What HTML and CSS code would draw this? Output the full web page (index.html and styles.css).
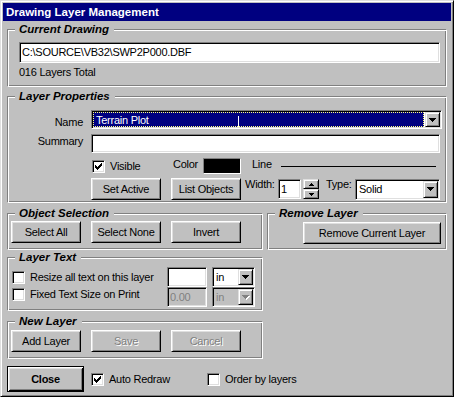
FILE: index.html
```html
<!DOCTYPE html>
<html lang="en">
<head>
    <meta charset="UTF-8">
    <meta name="viewport" content="width=device-width, initial-scale=1.0">
    <title>Drawing Layer Management</title>
    <link rel="stylesheet" href="styles.css">
</head>
<body>
    <div class="window">
        <div class="title-bar">Drawing Layer Management</div>
        <div class="client">
            <fieldset class="group current-drawing">
                <legend>Current Drawing</legend>
                <div class="field path-field">C:\SOURCE\VB32\SWP2P000.DBF</div>
                <div class="layer-count">016 Layers Total</div>
            </fieldset>

            <fieldset class="group layer-props">
                <legend>Layer Properties</legend>
                <div class="props-grid">
                    <span class="prop-label name-label">Name</span>
                    <div class="field combo name-combo">
                        <span class="combo-selected">Terrain Plot</span>
                        <span class="drop-button">
                            <svg width="7" height="4" viewBox="0 0 7 4"><path d="M0 0h7v1H0zM1 1h5v1H1zM2 2h3v1H2zM3 3h1v1H3z"/></svg>
                        </span>
                        <span class="text-cursor"></span>
                    </div>
                    <span class="prop-label summary-label">Summary</span>
                    <div class="field summary-field"></div>

                    <div class="style-row">
                        <div class="visible-box">
                            <span class="check">
                                <svg width="7" height="7" viewBox="0 0 7 7"><path d="M6 0h1v1H6zM5 1h2v1H5zM0 2h1v1H0zM4 2h3v1H4zM0 3h2v1H0zM3 3h3v1H3zM0 4h5v1H0zM1 5h3v1H1zM2 6h1v1H2z"/></svg>
                            </span>
                            <span class="check-text">Visible</span>
                        </div>
                        <span class="color-label">Color</span>
                        <span class="color-swatch"></span>
                        <span class="line-label">Line</span>
                        <span class="line-sample"></span>
                    </div>

                    <div class="action-row">
                        <button class="button">Set Active</button>
                        <button class="button list-button">List Objects</button>
                        <span class="width-label">Width:</span>
                        <div class="field width-field">1</div>
                        <div class="spinner">
                            <span class="spin-button">
                                <svg width="5" height="3" viewBox="0 0 5 3"><path d="M2 0h1v1H2zM1 1h3v1H1zM0 2h5v1H0z"/></svg>
                            </span>
                            <span class="spin-button">
                                <svg width="5" height="3" viewBox="0 0 5 3"><path d="M0 0h5v1H0zM1 1h3v1H1zM2 2h1v1H2z"/></svg>
                            </span>
                        </div>
                        <span class="type-label">Type:</span>
                        <div class="field combo type-combo">
                            <span class="combo-text">Solid</span>
                            <span class="drop-button">
                                <svg width="7" height="4" viewBox="0 0 7 4"><path d="M0 0h7v1H0zM1 1h5v1H1zM2 2h3v1H2zM3 3h1v1H3z"/></svg>
                            </span>
                        </div>
                    </div>
                </div>
            </fieldset>

            <div class="split-row">
                <fieldset class="group object-selection">
                    <legend>Object Selection</legend>
                    <div class="button-row">
                        <button class="button">Select All</button>
                        <button class="button">Select None</button>
                        <button class="button">Invert</button>
                    </div>
                </fieldset>
                <fieldset class="group remove-layer">
                    <legend>Remove Layer</legend>
                    <button class="button remove-button">Remove Current Layer</button>
                </fieldset>
            </div>

            <fieldset class="group layer-text">
                <legend>Layer Text</legend>
                <div class="text-options">
                    <div class="text-checks">
                        <div class="check-item">
                            <span class="check"></span>
                            <span class="check-text">Resize all text on this layer</span>
                        </div>
                        <div class="check-item">
                            <span class="check"></span>
                            <span class="check-text">Fixed Text Size on Print</span>
                        </div>
                    </div>
                    <div class="text-sizes">
                        <div class="size-row">
                            <div class="field size-field"></div>
                            <div class="field combo unit-combo">
                                <span class="combo-text">in</span>
                                <span class="drop-button">
                                    <svg width="7" height="4" viewBox="0 0 7 4"><path d="M0 0h7v1H0zM1 1h5v1H1zM2 2h3v1H2zM3 3h1v1H3z"/></svg>
                                </span>
                            </div>
                        </div>
                        <div class="size-row">
                            <div class="field size-field disabled">0.00</div>
                            <div class="field combo unit-combo disabled">
                                <span class="combo-text">in</span>
                                <span class="drop-button">
                                    <svg width="8" height="5" viewBox="0 0 8 5"><path fill="#fff" d="M1 1h7v1H1zM2 2h5v1H2zM3 3h3v1H3zM4 4h1v1H4z"/><path fill="#808080" d="M0 0h7v1H0zM1 1h5v1H1zM2 2h3v1H2zM3 3h1v1H3z"/></svg>
                                </span>
                            </div>
                        </div>
                    </div>
                </div>
            </fieldset>

            <fieldset class="group new-layer">
                <legend>New Layer</legend>
                <div class="button-row">
                    <button class="button">Add Layer</button>
                    <button class="button" disabled>Save</button>
                    <button class="button" disabled>Cancel</button>
                </div>
            </fieldset>

            <div class="footer">
                <button class="button close-button">Close</button>
                <div class="check-item auto-redraw">
                    <span class="check">
                        <svg width="7" height="7" viewBox="0 0 7 7"><path d="M6 0h1v1H6zM5 1h2v1H5zM0 2h1v1H0zM4 2h3v1H4zM0 3h2v1H0zM3 3h3v1H3zM0 4h5v1H0zM1 5h3v1H1zM2 6h1v1H2z"/></svg>
                    </span>
                    <span class="check-text">Auto Redraw</span>
                </div>
                <div class="check-item">
                    <span class="check"></span>
                    <span class="check-text">Order by layers</span>
                </div>
            </div>
        </div>
    </div>
</body>
</html>
```

FILE: styles.css
```css
body {
    margin: 0;
    background-color: #c0c0c0;
    font-family: "Liberation Sans", Arial, sans-serif;
    font-size: 11px;
    letter-spacing: -0.25px;
    color: #000;
}
.window {
    box-sizing: border-box;
    width: 454px;
    height: 397px;
    padding: 2px;
    border: 1px solid;
    border-color: #dfdfdf #000 #000 #dfdfdf;
    box-shadow: inset 1px 1px 0 #fff, inset -1px -1px 0 #808080;
    background-color: #c0c0c0;
}
.title-bar {
    height: 18px;
    padding-left: 3px;
    line-height: 18px;
    background-color: #000080;
    color: #fff;
    font-size: 11.5px;
    font-weight: bold;
    letter-spacing: 0;
}
.client {
    padding: 0 4px;
}

/* etched frames */
.group {
    min-width: 0;
    margin: 0;
    border: 1px solid;
    border-color: #808080 #fff #fff #808080;
    box-shadow: inset 1px 1px 0 #fff, inset -1px -1px 0 #808080;
}
.group legend {
    height: 13px;
    margin-left: 4px;
    padding: 0 5px 0 4px;
    line-height: 13px;
    font-size: 11.5px;
    font-weight: bold;
    font-style: italic;
    letter-spacing: 0;
    background-color: #c0c0c0;
}

/* sunken edit boxes */
.field {
    box-sizing: border-box;
    padding: 1px 2px;
    border: 1px solid;
    border-color: #808080 #fff #fff #808080;
    box-shadow: inset 1px 1px 0 #000, inset -1px -1px 0 #dfdfdf;
    background-color: #fff;
    line-height: 16px;
    white-space: nowrap;
}
.field.disabled {
    background-color: #c0c0c0;
    color: #808080;
}

/* raised buttons */
.button {
    box-sizing: border-box;
    width: 70px;
    height: 22px;
    padding: 0;
    border: 1px solid;
    border-color: #fff #000 #000 #fff;
    box-shadow: inset 1px 1px 0 #dfdfdf, inset -1px -1px 0 #808080;
    background-color: #c0c0c0;
    font: inherit;
    letter-spacing: inherit;
    color: #000;
}
.button:disabled {
    color: #808080;
    text-shadow: 1px 1px 0 #fff;
}
.button-row {
    display: flex;
    gap: 10px;
}

.combo {
    position: relative;
    display: flex;
    padding: 1px;
}
.combo-text {
    flex: 1;
    padding: 1px 0 0 2px;
    line-height: 14px;
}
.drop-button {
    box-sizing: border-box;
    display: flex;
    align-items: center;
    justify-content: center;
    width: 15px;
    border: 1px solid;
    border-color: #dfdfdf #000 #000 #dfdfdf;
    box-shadow: inset 1px 1px 0 #fff, inset -1px -1px 0 #808080;
    background-color: #c0c0c0;
}
.drop-button svg {
    display: block;
}

.check {
    box-sizing: border-box;
    width: 13px;
    height: 13px;
    padding: 2px;
    border: 1px solid;
    border-color: #808080 #fff #fff #808080;
    box-shadow: inset 1px 1px 0 #000, inset -1px -1px 0 #dfdfdf;
    background-color: #fff;
}
.check svg {
    display: block;
}
.check-item {
    display: flex;
    align-items: center;
    height: 13px;
}
.check-text {
    margin-left: 5px;
    line-height: 13px;
    white-space: nowrap;
}

/* Current Drawing */
.current-drawing {
    margin-top: 2px;
    padding: 6px 3px 7px;
}
.path-field {
    width: 421px;
    height: 21px;
    margin-left: 8px;
    line-height: 17px;
}
.layer-count {
    margin: 3px 0 0 8px;
    line-height: 13px;
}

/* Layer Properties */
.layer-props {
    margin-top: 3px;
    padding: 7px 3px 2px;
}
.props-grid {
    display: grid;
    grid-template-columns: 72px 351px;
    column-gap: 8px;
    row-gap: 5px;
}
.prop-label {
    text-align: right;
    line-height: 13px;
}
.name-label {
    padding-top: 6px;
}
.summary-label {
    padding-top: 1px;
}
.name-combo {
    height: 19px;
}
.combo-selected {
    box-sizing: border-box;
    flex: 1;
    height: 15px;
    margin-right: 1px;
    padding: 1px 0 0 2px;
    border: 1px dotted #ffff80;
    background-color: #000080;
    color: #fff;
    line-height: 12px;
}
.text-cursor {
    position: absolute;
    left: 146px;
    top: 5px;
    width: 1px;
    height: 11px;
    background-color: #fff;
}
.summary-field {
    width: 349px;
    height: 19px;
}
.style-row {
    grid-column: 2;
    display: flex;
    align-items: center;
    height: 16px;
}
.visible-box {
    display: flex;
    align-items: center;
    width: 79px;
    padding-left: 1px;
}
.color-label {
    width: 30px;
    padding: 0 0 3px 2px;
    line-height: 13px;
}
.color-swatch {
    box-sizing: border-box;
    width: 38px;
    height: 16px;
    border: 1px solid;
    border-color: #808080 #fff #fff #808080;
    background-color: #000;
}
.line-label {
    margin-left: 11px;
    padding-bottom: 3px;
    line-height: 13px;
}
.line-sample {
    flex: 1;
    height: 1px;
    margin: 0 6px 0 9px;
    background-color: #000;
}
.action-row {
    grid-column: 2;
    display: flex;
    align-items: center;
    height: 22px;
    margin-top: -1px;
}
.list-button {
    margin-left: 10px;
}
.width-label,
.type-label {
    align-self: flex-start;
    line-height: 13px;
}
.width-label {
    width: 33px;
    margin-left: 4px;
}
.width-field {
    width: 23px;
    height: 20px;
}
.spinner {
    display: flex;
    flex-direction: column;
    width: 16px;
    height: 20px;
    margin-left: 2px;
}
.spin-button {
    box-sizing: border-box;
    display: flex;
    align-items: center;
    justify-content: center;
    height: 10px;
    border: 1px solid;
    border-color: #dfdfdf #000 #000 #dfdfdf;
    box-shadow: inset 1px 1px 0 #fff, inset -1px -1px 0 #808080;
}
.spin-button svg {
    display: block;
}
.type-label {
    width: 29px;
    margin-left: 7px;
}
.type-combo {
    width: 85px;
    height: 21px;
}

/* Object Selection / Remove Layer */
.split-row {
    display: flex;
    gap: 4px;
    margin-top: 4px;
}
.object-selection {
    width: 256px;
    box-sizing: border-box;
    padding: 1px 3px 6px;
}
.remove-layer {
    flex: 1;
    padding: 2px 3px 5px;
}
.remove-button {
    width: 138px;
    margin-left: 32px;
}

/* Layer Text */
.layer-text {
    width: 256px;
    box-sizing: border-box;
    margin-top: 1px;
    padding: 3px 3px 3px;
}
.text-options {
    display: flex;
}
.text-checks {
    display: flex;
    flex-direction: column;
    gap: 4px;
    width: 155px;
    padding: 4px 0 0 1px;
}
.size-row {
    display: flex;
    gap: 5px;
}
.size-field {
    width: 40px;
    height: 20px;
}
.unit-combo {
    width: 43px;
    height: 20px;
}

/* New Layer */
.new-layer {
    width: 256px;
    box-sizing: border-box;
    margin-top: 4px;
    padding: 2px 3px 6px;
}

/* bottom row */
.footer {
    display: flex;
    align-items: center;
    height: 26px;
    margin-top: 7px;
}
.close-button {
    width: 77px;
    height: 26px;
    border-color: #000;
    box-shadow: inset 1px 1px 0 #fff, inset -1px -1px 0 #000, inset 2px 2px 0 #dfdfdf, inset -2px -2px 0 #808080;
    font-weight: bold;
}
.auto-redraw {
    width: 109px;
    margin-left: 7px;
}
.auto-redraw + .check-item {
    margin-left: 7px;
}
```
